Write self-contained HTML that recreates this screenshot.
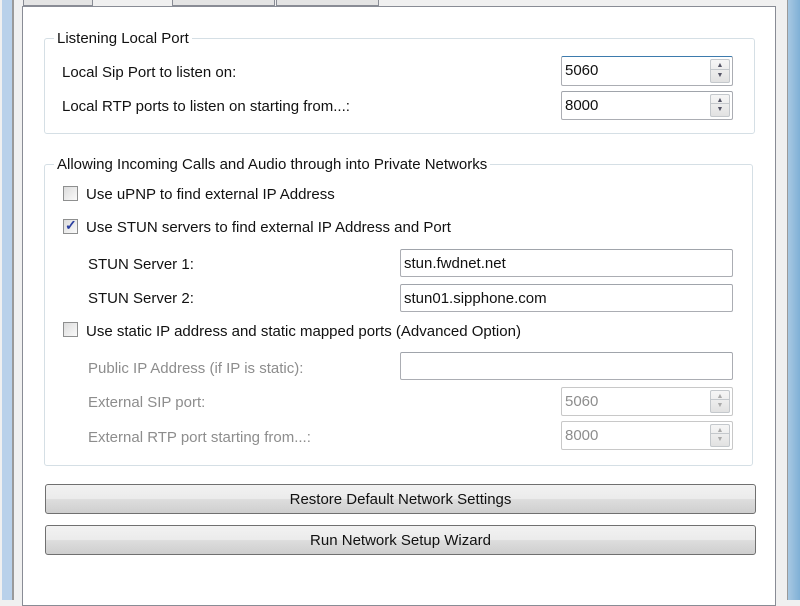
<!DOCTYPE html>
<html><head><style>
body{margin:0;width:800px;height:600px;overflow:hidden;background:#f0f0f0;font-family:"Liberation Sans",sans-serif;font-size:15px;color:#111;position:relative}
div{position:absolute;box-sizing:border-box}
.t{white-space:nowrap;line-height:18px;margin-top:2px}
.grp{border:1px solid #d5dfe5;border-radius:3px}
.leg{background:#fff;padding:0 3px;margin-top:1px}
.inp{background:#fff;border:1px solid #abadb3;border-top-color:#a0a4ab;border-radius:2px;padding-left:3px;line-height:28px;font-size:15px}
.spin{position:absolute;right:2px;top:2px;bottom:2px;width:20px;border:1px solid #c4c8cc;background:linear-gradient(#f6f6f6,#e2e2e2);border-radius:2px}
.spin:before{content:"▲";position:absolute;top:0;left:0;width:100%;text-align:center;font-size:7px;color:#556;line-height:12px}
.spin:after{content:"▼";position:absolute;bottom:0;left:0;width:100%;text-align:center;font-size:7px;color:#556;line-height:12px;border-top:1px solid #c4c8cc}
.dis{color:#8d8d8d;border-color:#c8c8c8}
.dis .spin:before,.dis .spin:after{color:#aaa}
.cb{width:15px;height:15px;border:1px solid #8e8f8f;background:linear-gradient(135deg,#dcdcdc,#fafafa)}
.btn{border:1px solid #707070;border-radius:3px;background:linear-gradient(#f2f2f2 0%,#ebebeb 50%,#dddddd 51%,#cfcfcf 100%);text-align:center;line-height:29px;font-size:15px}
.g{color:#8d8d8d}
</style></head><body>
<div style="left:2px;top:0;width:10px;height:600px;background:#b9d1ea"></div>
<div style="left:12px;top:0;width:2px;height:600px;background:#9a9a9a"></div>
<div style="left:787px;top:0;width:1px;height:600px;background:#9a9a9a"></div>
<div style="left:788px;top:0;width:12px;height:600px;background:linear-gradient(90deg,#a8c8e2,#7fb0d6)"></div>
<div style="left:23px;top:-4px;width:70px;height:10px;border:1px solid #898c95;background:#e4e4e4"></div>
<div style="left:172px;top:-4px;width:103px;height:10px;border:1px solid #898c95;background:#e4e4e4"></div>
<div style="left:276px;top:-4px;width:103px;height:10px;border:1px solid #898c95;background:#e4e4e4"></div>
<div style="left:22px;top:6px;width:754px;height:600px;border:1px solid #898c95;background:#fff"></div>

<div class="grp" style="left:44px;top:38px;width:711px;height:96px"></div>
<div class="t leg" style="left:54px;top:29px">Listening Local Port</div>
<div class="t" style="left:62px;top:62px">Local Sip Port to listen on:</div>
<div class="t" style="left:62px;top:96px">Local RTP ports to listen on starting from...:</div>
<div class="inp" style="left:561px;top:56px;width:172px;height:30px;border-top-color:#3d7bad">5060<div class="spin"></div></div>
<div class="inp" style="left:561px;top:91px;width:172px;height:29px">8000<div class="spin"></div></div>

<div class="grp" style="left:44px;top:164px;width:709px;height:302px"></div>
<div class="t leg" style="left:54px;top:155px">Allowing Incoming Calls and Audio through into Private Networks</div>
<div class="cb" style="left:63px;top:186px"></div>
<div class="t" style="left:86px;top:184px">Use uPNP to find external IP Address</div>
<div class="cb" style="left:63px;top:219px"><span style="position:absolute;left:1px;top:-3px;color:#2a3fa0;font-size:14px;font-weight:bold">✓</span></div>
<div class="t" style="left:86px;top:217px">Use STUN servers to find external IP Address and Port</div>
<div class="t" style="left:88px;top:254px">STUN Server 1:</div>
<div class="inp" style="left:400px;top:249px;width:333px;height:28px">stun.fwdnet.net</div>
<div class="t" style="left:88px;top:288px">STUN Server 2:</div>
<div class="inp" style="left:400px;top:284px;width:333px;height:28px">stun01.sipphone.com</div>
<div class="cb" style="left:63px;top:322px"></div>
<div class="t" style="left:86px;top:321px">Use static IP address and static mapped ports (Advanced Option)</div>
<div class="t g" style="left:88px;top:358px">Public IP Address (if IP is static):</div>
<div class="inp" style="left:400px;top:352px;width:333px;height:28px"></div>
<div class="t g" style="left:88px;top:392px">External SIP port:</div>
<div class="inp dis" style="left:561px;top:387px;width:172px;height:29px">5060<div class="spin"></div></div>
<div class="t g" style="left:88px;top:427px">External RTP port starting from...:</div>
<div class="inp dis" style="left:561px;top:421px;width:172px;height:29px">8000<div class="spin"></div></div>

<div class="btn" style="left:45px;top:484px;width:711px;height:30px">Restore Default Network Settings</div>
<div class="btn" style="left:45px;top:525px;width:711px;height:30px">Run Network Setup Wizard</div>
</body></html>
